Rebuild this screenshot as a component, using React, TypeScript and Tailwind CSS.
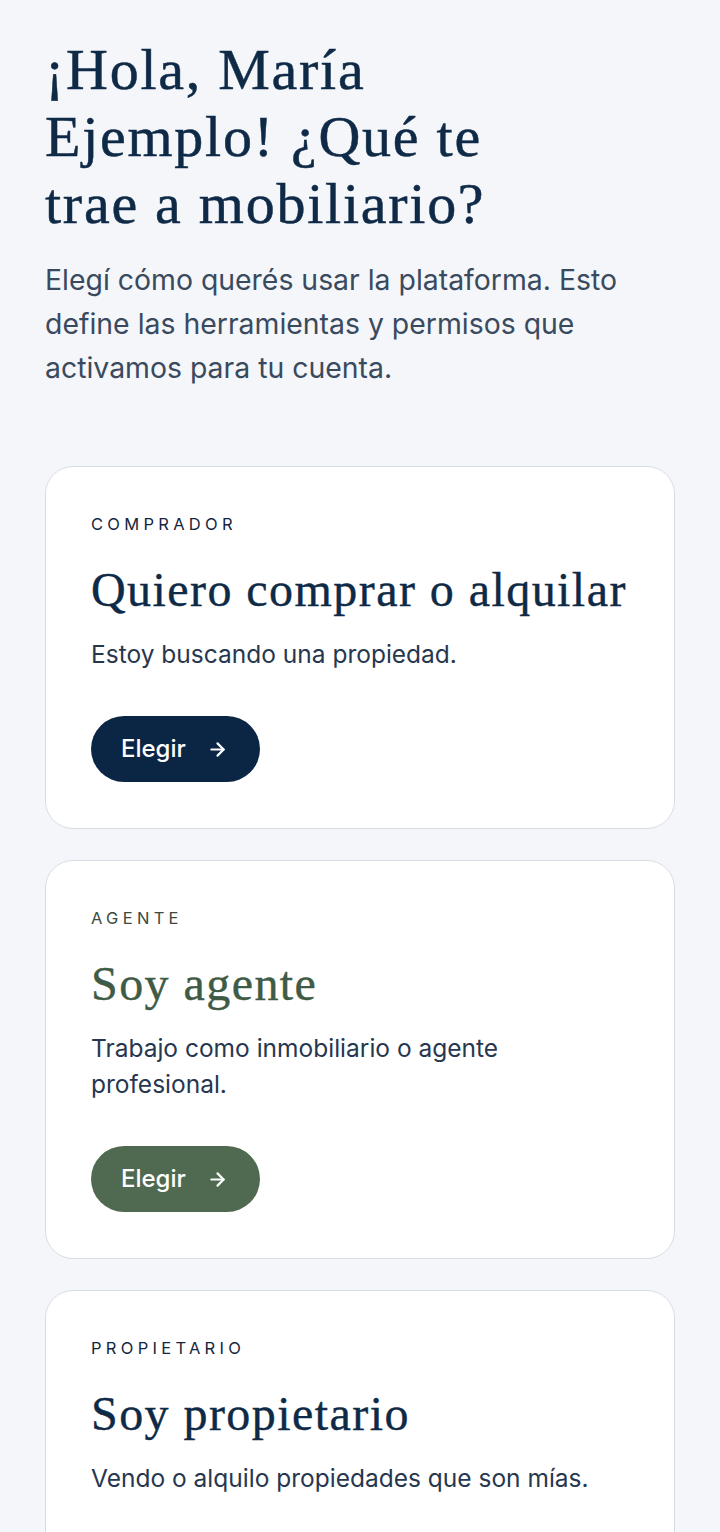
import React from "react";
import { ArrowRight } from "lucide-react";

const serif = { fontFamily: '"Liberation Serif", "Times New Roman", serif' };

type CardProps = {
  label: string;
  title: string;
  desc: string;
  variant: "navy" | "green";
};

function Card({ label, title, desc, variant }: CardProps) {
  const green = variant === "green";
  return (
    <div className="rounded-[28px] border-[1.5px] border-[#d8dce4] bg-white px-[45px] pt-[45px] pb-[46px]">
      <div
        className={`text-[16.5px] leading-[24px] tracking-[0.26em] ${green ? "text-[#3a4a3e]" : "text-[#13263d]"}`}
      >
        {label}
      </div>
      <h2
        style={serif}
        className={`mt-[25px] text-[48px] leading-[58px] tracking-[0.03em] [-webkit-text-stroke:0.4px_currentColor] ${green ? "text-[#3f5b45]" : "text-[#0f2a47]"}`}
      >
        {title}
      </h2>
      <p className="mt-[17px] text-[24.5px] leading-[36px] text-[#27374f]">{desc}</p>
      <button
        className={`mt-[44px] flex h-[66px] items-center gap-[21px] rounded-full pl-[30px] pr-[32px] text-[24px] font-medium text-white ${green ? "bg-[#4f6a50]" : "bg-[#0b2644]"}`}
      >
        <span>Elegir</span>
        <ArrowRight size={21} strokeWidth={2.5} />
      </button>
    </div>
  );
}

export default function App() {
  return (
    <div
      className="min-h-[1532px] bg-[#f4f6fa] px-[45px] pt-[36px] pb-[40px]"
      style={{ fontFamily: 'Inter, "Liberation Sans", sans-serif' }}
    >
      <h1
        style={serif}
        className="max-w-[500px] text-[58px] leading-[67px] tracking-[0.03em] text-[#0f2a47] [-webkit-text-stroke:0.5px_currentColor]"
      >
        ¡Hola, María Ejemplo! ¿Qué te trae a mobiliario?
      </h1>
      <p className="mt-[21px] text-[28.4px] leading-[44px] text-[#3a4a5e]">
        Elegí cómo querés usar la plataforma. Esto define las herramientas y permisos que activamos para tu cuenta.
      </p>
      <div className="mt-[76px] flex flex-col gap-[31px]">
        <Card
          label="COMPRADOR"
          title="Quiero comprar o alquilar"
          desc="Estoy buscando una propiedad."
          variant="navy"
        />
        <Card
          label="AGENTE"
          title="Soy agente"
          desc="Trabajo como inmobiliario o agente profesional."
          variant="green"
        />
        <Card
          label="PROPIETARIO"
          title="Soy propietario"
          desc="Vendo o alquilo propiedades que son mías."
          variant="navy"
        />
      </div>
    </div>
  );
}
